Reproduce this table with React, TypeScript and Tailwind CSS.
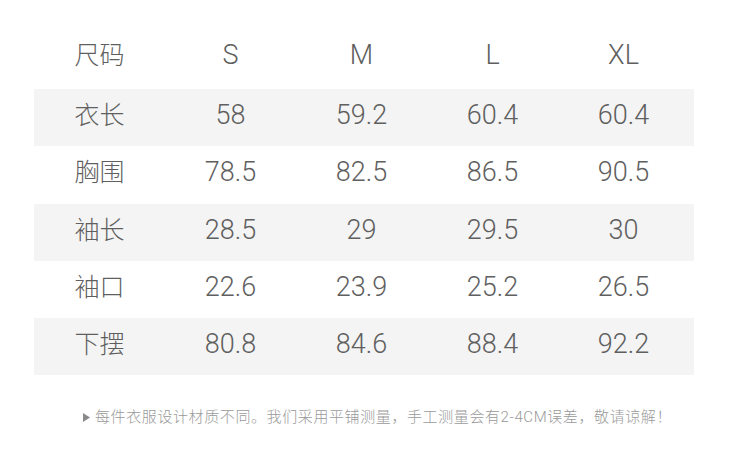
const head = ["尺码", "S", "M", "L", "XL"];

const rows: string[][] = [
  ["衣长", "58", "59.2", "60.4", "60.4"],
  ["胸围", "78.5", "82.5", "86.5", "90.5"],
  ["袖长", "28.5", "29", "29.5", "30"],
  ["袖口", "22.6", "23.9", "25.2", "26.5"],
  ["下摆", "80.8", "84.6", "88.4", "92.2"],
];

function Row({ cells, shaded, tall }: { cells: string[]; shaded?: boolean; tall?: boolean }) {
  return (
    <div
      className={`grid grid-cols-[131px_131px_131px_131px_131px] items-center pr-[5px] pb-[4px] ${tall ? "h-[63px]" : "h-[57.3px]"} ${shaded ? "bg-[#f4f4f4]" : ""}`}
    >
      {cells.map((c, i) => (
        <div key={i} className={`text-center ${i === 0 ? "text-[25px]" : "text-[27px]"}`}>
          {c}
        </div>
      ))}
    </div>
  );
}

export default function App() {
  return (
    <div
      className="w-[750px] h-[476px] bg-white text-[#5f5f5f] font-light overflow-hidden"
      style={{ fontFamily: 'Roboto, "Noto Sans CJK SC", sans-serif' }}
    >
      <div className="pt-[26px] pl-[34px] w-[694px]">
        <div className="leading-none">
          <Row cells={head} tall />
          {rows.map((r, i) => (
            <Row key={r[0]} cells={r} shaded={i % 2 === 0} />
          ))}
        </div>
      </div>
      <div className="mt-[35px] pl-[83px] flex items-center gap-[5px] text-[15px] leading-none tracking-[0.6px] text-[#9a9a9a]">
        <svg width="7" height="9" viewBox="0 0 7 9" aria-hidden="true">
          <path d="M0 0L7 4.5L0 9Z" fill="#8a8a8a" />
        </svg>
        <span>每件衣服设计材质不同。我们采用平铺测量，手工测量会有2-4CM误差，敬请谅解！</span>
      </div>
    </div>
  );
}
